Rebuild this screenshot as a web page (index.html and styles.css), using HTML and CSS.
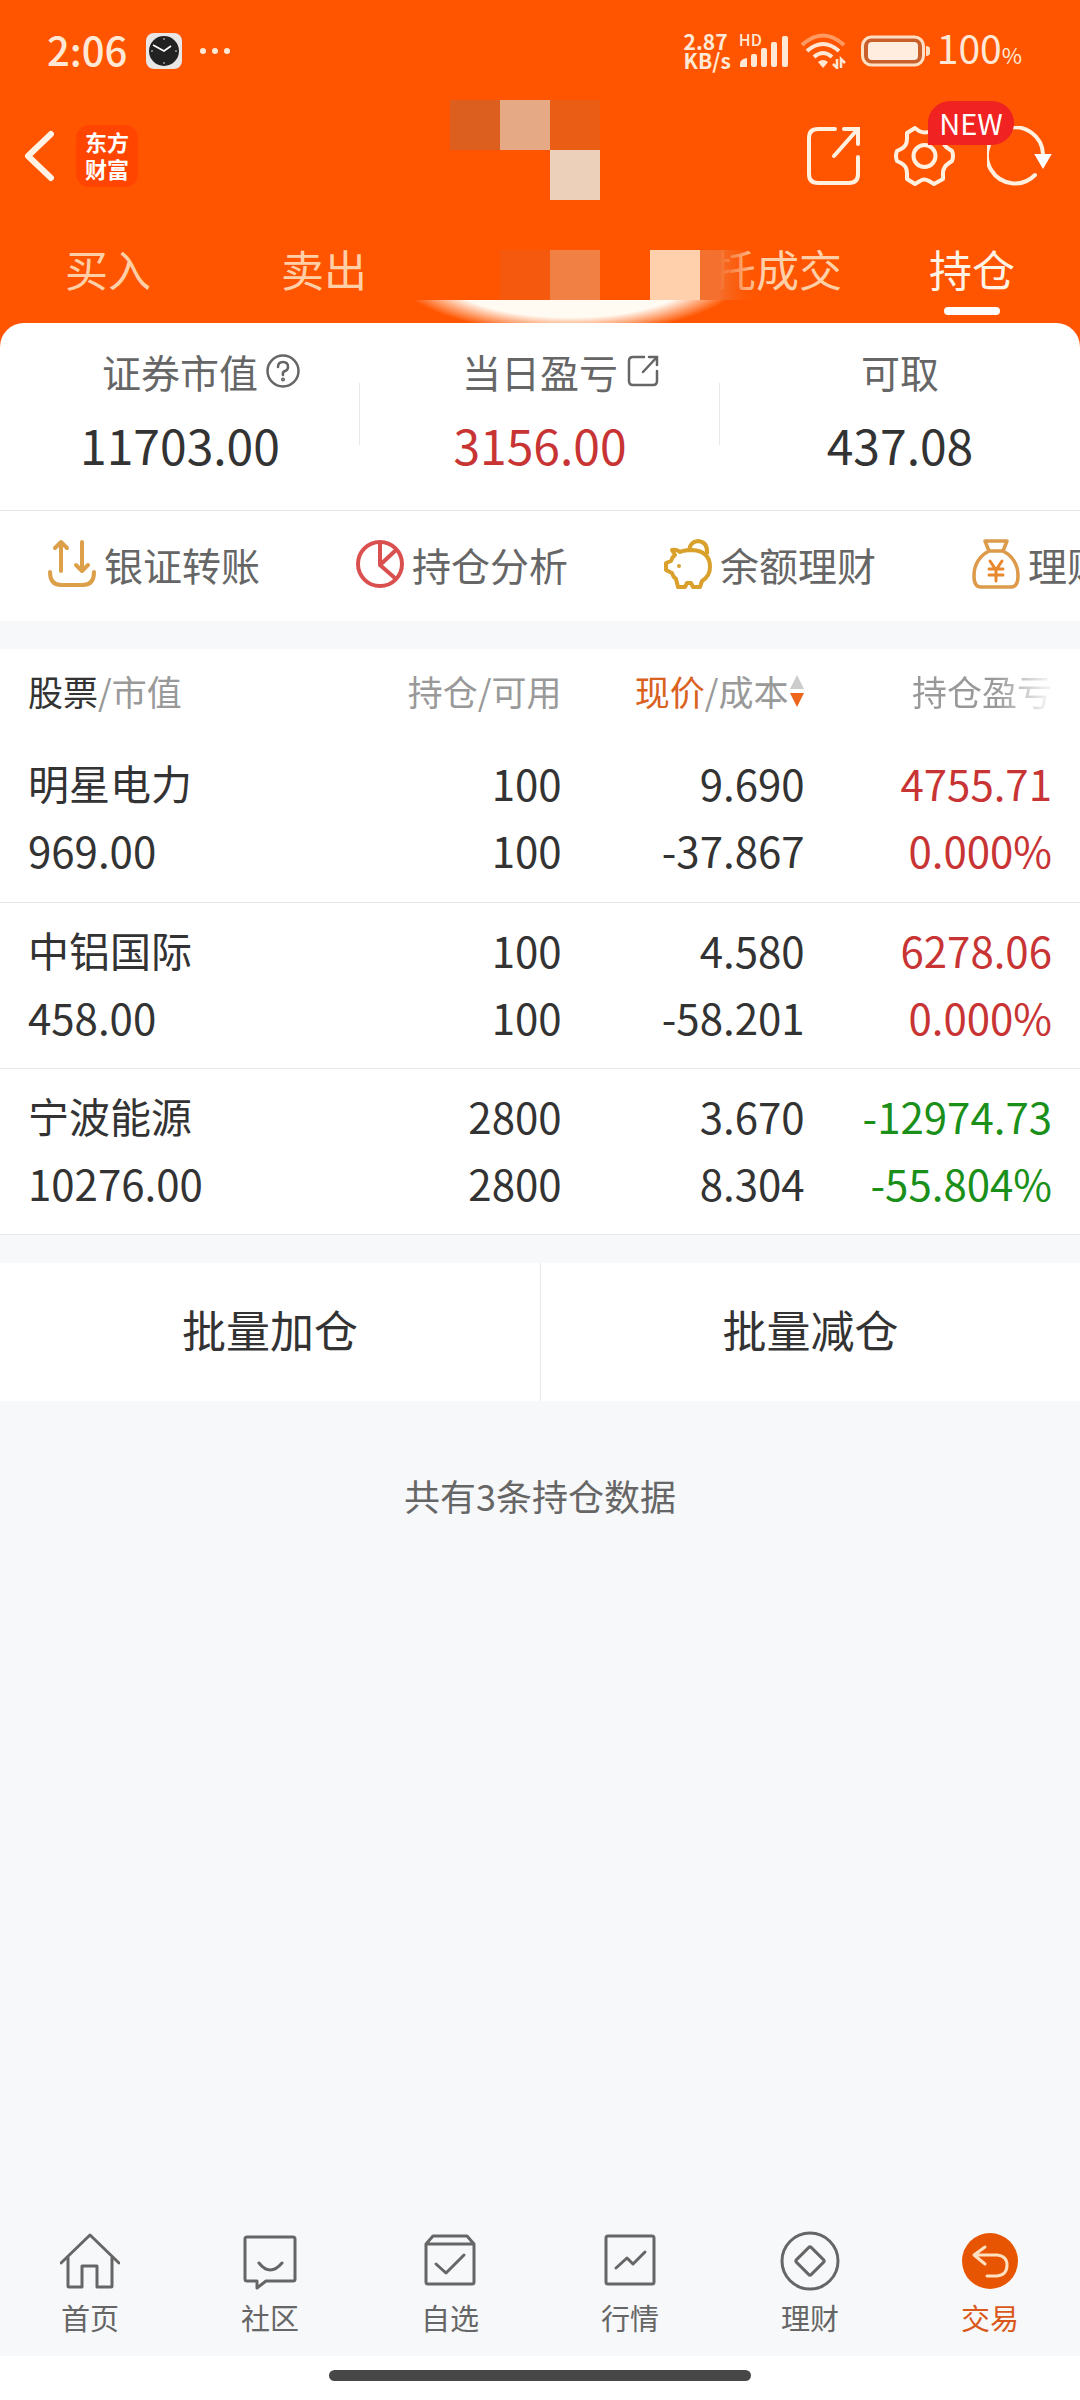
FILE: index.html
```html
<!DOCTYPE html>
<html lang="zh-CN">
<head>
  <meta charset="UTF-8">
  <meta name="viewport" content="width=device-width, initial-scale=1">
  <title>持仓</title>
  <link rel="stylesheet" href="styles.css">
</head>
<body>
  <header class="header">
    <div class="status">
      <span class="time">2:06</span>
      <svg class="clock" width="36" height="36" viewBox="0 0 36 36">
        <rect width="36" height="36" rx="8" fill="#e9e6e6"/>
        <circle cx="18" cy="18" r="15" fill="#222"/>
        <path d="M7 12l11 6 7-5" fill="none" stroke="#fff" stroke-width="1.6"/>
        <g fill="#999"><circle cx="18" cy="6" r="1"/><circle cx="18" cy="30" r="1"/><circle cx="6" cy="18" r="1"/><circle cx="30" cy="18" r="1"/></g>
      </svg>
      <svg width="32" height="8" viewBox="0 0 32 8" fill="#ffe9d6">
        <circle cx="4" cy="4" r="3"/><circle cx="16" cy="4" r="3"/><circle cx="28" cy="4" r="3"/>
      </svg>
      <div class="status-right">
        <div class="speed"><span>2.87</span><span>KB/s</span></div>
        <div class="signal">
          <span class="hd">HD</span>
          <svg width="50" height="32" viewBox="0 0 50 32" fill="#ffe9d6">
            <path d="M1 32v-3q0-5 7-6v9z"/>
            <rect x="12" y="19" width="6" height="13" rx="2"/><rect x="22" y="13" width="6" height="19" rx="2"/>
            <rect x="32" y="7" width="6" height="25" rx="2"/><rect x="43" y="1" width="6" height="31" rx="2"/>
          </svg>
        </div>
        <svg class="wifi" width="48" height="36" viewBox="0 0 48 36" fill="none" stroke="#ffe9d6" stroke-width="4">
          <path d="M2 12q21-19 42 0" stroke="#ff9a62"/>
          <path d="M7 18q16-14 32 0M14 24q9-8 18 0"/>
          <path d="M18 29q5-4 10 0l-5 6z" fill="#ffe9d6" stroke="none"/>
          <path d="M37 26v9l-4-4M41 35v-9l4 4" stroke-width="2.5"/>
        </svg>
        <svg width="70" height="32" viewBox="0 0 70 32">
          <rect x="1.500" y="2" width="61" height="28" rx="9" fill="#c9602c" stroke="#ffe0c4" stroke-width="3"/>
          <rect x="7" y="7" width="50" height="18" rx="4" fill="#ffede0"/>
          <path d="M65 11q4 0 4 3v4q0 3-4 3z" fill="#ffe0c4"/>
        </svg>
        <span class="battery">100<small>%</small></span>
      </div>
    </div>

    <div class="titlebar">
      <button class="back" aria-label="返回">
        <svg width="32" height="52" viewBox="0 0 32 52" fill="none" stroke="#fff3e6" stroke-width="6" stroke-linecap="round" stroke-linejoin="round"><path d="M27 4L4 26l23 22"/></svg>
      </button>
      <div class="logo"><span>东方</span><span>财富</span></div>
      <div class="actions">
        <button aria-label="分享">
          <svg width="56" height="60" viewBox="0 0 56 60" fill="none" stroke="#fff0e0" stroke-width="4" stroke-linecap="round">
            <path d="M29 3H12Q3 3 3 12v36q0 9 9 9h31q9 0 9-9V31M38 3h14v15M51 4L28 30"/>
          </svg>
        </button>
        <button class="settings" aria-label="设置">
          <svg width="61" height="60" viewBox="0 0 61 60" fill="none" stroke="#fff0e0" stroke-width="4" stroke-linejoin="round">
            <path d="M21 2l4 3q6 3 12 0l4-3 8 5v6q0 7 6 10l3 2q2 5 0 10l-3 2q-6 4-6 10v6l-9 5-5-3q-5-3-9 0l-5 3-8-5v-6q0-7-6-10l-4-2q-2-5 0-10l4-2q6-3 6-10V7z"/>
            <circle cx="30.500" cy="30" r="11"/>
          </svg>
          <span class="badge">NEW</span>
        </button>
        <button aria-label="刷新">
          <svg width="65" height="60" viewBox="0 0 65 60" fill="none" stroke="#fff0e0" stroke-width="4" stroke-linecap="round">
            <path d="M48 49A28 28 0 1 1 56 28"/>
            <path d="M49 29h14l-7 12z" fill="#fff" stroke="#fff" stroke-width="2"/>
          </svg>
        </button>
      </div>
    </div>

    <nav class="tabs">
      <button>买入</button>
      <button>卖出</button>
      <button aria-hidden="true"></button>
      <button>委托成交</button>
      <button class="active">持仓</button>
    </nav>

    <!-- mosaic over the account name and the middle tabs -->
    <svg class="mosaic" width="370" height="223" viewBox="0 0 370 223">
      <defs>
        <linearGradient id="fade"><stop offset="0" stop-color="#f3702f"/><stop offset="0.3" stop-color="#f3702f"/><stop offset="1" stop-color="#ff5500" stop-opacity="0"/></linearGradient>
        <radialGradient id="glow"><stop offset="0.75" stop-color="#fffaf2"/><stop offset="1" stop-color="#fffaf2" stop-opacity="0"/></radialGradient>
        <clipPath id="band"><rect y="200" width="370" height="23"/></clipPath>
      </defs>
      <g shape-rendering="crispEdges">
        <rect x="40" width="50" height="50" fill="#dd5f20"/>
        <rect x="90" width="50" height="50" fill="#e5a986"/>
        <rect x="140" width="50" height="50" fill="#e95e14"/>
        <rect x="140" y="50" width="50" height="50" fill="#ecd0b9"/>
        <rect x="90" y="150" width="50" height="50" fill="#f5590d"/>
        <rect x="140" y="150" width="50" height="50" fill="#f08043"/>
        <rect x="240" y="150" width="50" height="50" fill="#ffd0ab"/>
        <rect x="290" y="150" width="60" height="50" fill="url(#fade)"/>
      </g>
      <ellipse cx="160" cy="168" rx="180" ry="66" fill="url(#glow)" clip-path="url(#band)"/>
    </svg>
  </header>

  <main>
    <section class="card">
      <div class="summary">
        <div class="stat">
          <div class="stat-label"><span>证券市值</span>
            <svg width="34" height="34" viewBox="0 0 34 34" fill="none" stroke="#666" stroke-width="2.500" stroke-linecap="round">
              <circle cx="17" cy="17" r="15.500"/><path d="M12 13q0-5 5-5t5 5q0 3-3 4t-2 4"/><circle cx="17" cy="25.500" r="0.800"/>
            </svg>
          </div>
          <div class="stat-value">11703.00</div>
        </div>
        <div class="stat">
          <div class="stat-label"><span>当日盈亏</span>
            <svg width="34" height="34" viewBox="0 0 34 34" fill="none" stroke="#666" stroke-width="2.500" stroke-linecap="round">
              <path d="M18 3H7Q3 3 3 7v20q0 4 4 4h20q4 0 4-4V17M23 3h8v8M31 3L17 18"/>
            </svg>
          </div>
          <div class="stat-value up">3156.00</div>
        </div>
        <div class="stat">
          <div class="stat-label"><span>可取</span></div>
          <div class="stat-value">437.08</div>
        </div>
      </div>

      <div class="tools">
        <button>
          <svg width="48" height="50" viewBox="0 0 48 50" fill="none" stroke="#dda04a" stroke-width="4" stroke-linecap="round" stroke-linejoin="round">
            <path d="M2 33q0 13 11 13h22q11 0 11-13M13 32V4M7 9l6-6 6 6M34 3v29M28 26l6 6 6-6"/>
          </svg>银证转账
        </button>
        <button>
          <svg width="48" height="50" viewBox="0 0 48 50" fill="none" stroke="#d9504f" stroke-width="4" stroke-linejoin="round">
            <circle cx="24" cy="25" r="22"/><path d="M24 3v23L40 11M24 26l16 14"/>
          </svg>持仓分析
        </button>
        <button>
          <svg width="48" height="50" viewBox="0 0 48 50" fill="none" stroke="#d9a02c" stroke-width="4" stroke-linejoin="round">
            <path d="M8 11q5-1 8 2 4-2 12-2 18 1 18 17 0 9-8 14l-2 6h-7l-2-4h-4l-2 4h-7l-2-8q-3-2-4-6l-6-3v-7l5-2q1-4 4-6z"/>
            <path d="M25 11q1-8 9-9 10 1 9 13"/><circle cx="15" cy="27" r="1" stroke-width="2"/>
          </svg>余额理财
        </button>
        <button>
          <svg width="48" height="50" viewBox="0 0 48 50" fill="none" stroke="#dc9a4a" stroke-width="3.500" stroke-linejoin="round" stroke-linecap="round">
            <path d="M13 2h22l-4 10H17zM17 12Q2 20 2 37q0 11 7 11h30q7 0 7-11 0-17-15-25"/>
            <path d="M18 22l6 9 6-9M17 30h14M17 36h14M24 31v11" stroke="#e8882c" stroke-width="3"/>
          </svg>理财
        </button>
      </div>
    </section>

    <table class="holdings">
      <colgroup><col class="c-name"><col class="c-qty"><col class="c-price"><col></colgroup>
      <thead>
        <tr>
          <th><b>股票</b>/市值</th>
          <th>持仓/可用</th>
          <th><span class="sort"><b class="on">现价</b>/成本<svg width="16" height="34" viewBox="0 0 16 34"><path d="M8 1l7 14H1z" fill="#ccc"/><path d="M8 33l7-14H1z" fill="#ec651b"/></svg></span></th>
          <th><span class="faded">持仓盈亏</span></th>
        </tr>
      </thead>
      <tbody>
        <tr>
          <td><div class="name">明星电力</div>969.00</td>
          <td>100<br>100</td>
          <td>9.690<br>-37.867</td>
          <td class="up">4755.71<br>0.000%</td>
        </tr>
        <tr>
          <td><div class="name">中铝国际</div>458.00</td>
          <td>100<br>100</td>
          <td>4.580<br>-58.201</td>
          <td class="up">6278.06<br>0.000%</td>
        </tr>
        <tr>
          <td><div class="name">宁波能源</div>10276.00</td>
          <td>2800<br>2800</td>
          <td>3.670<br>8.304</td>
          <td class="down">-12974.73<br>-55.804%</td>
        </tr>
      </tbody>
    </table>

    <div class="batch">
      <button>批量加仓</button>
      <button>批量减仓</button>
    </div>

    <p class="count">共有3条持仓数据</p>
  </main>

  <nav class="bottom">
    <a href="#">
      <svg width="60" height="60" viewBox="0 0 60 60"><path d="M1 32L30 4l29 28M8 26v29q0 1 1 1h13V35h15v21h14q1 0 1-1V26"/></svg>
      首页
    </a>
    <a href="#">
      <svg width="60" height="60" viewBox="0 0 60 60"><path d="M7 6h46q2 0 2 2v40q0 2-2 2H26l-9 7v-7H7q-2 0-2-2V8q0-2 2-2zM19 32q11 14 23 0"/></svg>
      社区
    </a>
    <a href="#">
      <svg width="60" height="60" viewBox="0 0 60 60"><path d="M6 13v38q0 2 2 2h44q2 0 2-2V13l-7-8H13zM6 13h48M16 33l10 9 18-18"/></svg>
      自选
    </a>
    <a href="#">
      <svg width="60" height="60" viewBox="0 0 60 60"><rect x="6" y="5" width="48" height="48" rx="2"/><path d="M16 37l11-10 6 6 12-12"/></svg>
      行情
    </a>
    <a href="#">
      <svg width="60" height="60" viewBox="0 0 60 60"><circle cx="30" cy="30" r="28"/><rect x="19.500" y="19.500" width="21" height="21" rx="2" transform="rotate(45 30 30)"/></svg>
      理财
    </a>
    <a href="#" class="active">
      <svg width="60" height="60" viewBox="0 0 60 60"><circle cx="30" cy="30" r="28" fill="#e85502" stroke="none"/><path d="M25 16l-11 8 11 9M14 24h23q10 1 10 10 0 10-10 11H27" stroke="#ffe0c0" stroke-width="3"/></svg>
      交易
    </a>
  </nav>
  <div class="gesture"><span></span></div>
</body>
</html>
```
FILE: styles.css
```css
* {
  box-sizing: border-box;
}
body {
  margin: 0;
  min-height: 100vh;
  display: flex;
  flex-direction: column;
  background: #f7f8fa;
  color: #333;
  font-family: "Noto Sans CJK SC", sans-serif;
  overflow-x: hidden;
}
button {
  padding: 0;
  border: none;
  background: none;
  color: inherit;
  font: inherit;
  cursor: pointer;
}
svg {
  display: block;
  flex: none;
}
main {
  flex: 1;
}
.up {
  color: #c83434;
}
.down {
  color: #1a901a;
}

/* header */
.header {
  position: relative;
  background: #ff5500;
  color: #ffe9d6;
  padding-bottom: 24px;
}
.status {
  height: 102px;
  padding: 0 58px 0 47px;
  display: flex;
  align-items: center;
}
.time {
  padding-bottom: 4px;
  font-size: 40px;
  font-weight: 500;
}
.clock {
  margin: 0 17px 0 19px;
}
.status-right {
  margin-left: auto;
  display: flex;
  align-items: center;
}
.speed {
  display: flex;
  flex-direction: column;
  font-size: 21px;
  line-height: 19px;
  font-weight: 700;
}
.signal {
  position: relative;
  margin: 0 11px 0 8px;
}
.hd {
  position: absolute;
  left: 0;
  top: -2px;
  font-size: 16px;
  line-height: 12px;
  font-weight: 500;
}
.wifi {
  margin-right: 13px;
}
.battery {
  margin-left: 6px;
  padding-bottom: 2px;
  font-size: 39px;
  line-height: 50px;
}
.battery small {
  font-size: 22px;
}
.titlebar {
  height: 108px;
  padding: 0 28px 0 24px;
  display: flex;
  align-items: center;
}
.logo {
  width: 62px;
  height: 62px;
  margin-left: 20px;
  padding-top: 3px;
  display: flex;
  flex-direction: column;
  align-items: center;
  border-radius: 13px;
  background: #ff4500;
  color: #fff;
  font-size: 22px;
  line-height: 27px;
  font-weight: 700;
}
.actions {
  margin-left: auto;
  display: flex;
  gap: 32px;
}
.settings {
  position: relative;
}
.badge {
  position: absolute;
  z-index: 1;
  left: 34px;
  top: -25px;
  width: 86px;
  height: 44px;
  border-radius: 22px 22px 22px 0;
  background: #f02222;
  color: #fff;
  font-size: 29px;
  line-height: 42px;
}
.tabs {
  height: 113px;
  padding-top: 28px;
  display: grid;
  grid-template-columns: repeat(5, 1fr);
  align-items: start;
}
.tabs button {
  color: #ffcfa8;
  font-size: 43px;
  line-height: 60px;
}
.tabs .active {
  color: #fff3e6;
}
.tabs .active::after {
  content: "";
  display: block;
  width: 56px;
  height: 8px;
  margin: 9px auto 0;
  border-radius: 4px;
  background: #fff;
}
.mosaic {
  position: absolute;
  top: 100px;
  left: calc(50% - 130px);
}

/* account summary */
.card {
  position: relative;
  margin-top: -24px;
  border-radius: 24px 24px 0 0;
  background: #fff;
}
.summary {
  height: 188px;
  padding-top: 18px;
  display: grid;
  grid-template-columns: repeat(3, 1fr);
  border-bottom: 1px solid #e8e8e8;
}
.stat {
  text-align: center;
  background: linear-gradient(#e8e8e8, #e8e8e8) no-repeat right 42px / 1px 62px;
}
.stat:last-child {
  background: none;
}
.stat-label {
  display: grid;
  grid-template-columns: 1fr auto 1fr;
  align-items: center;
  column-gap: 8px;
  color: #666;
  font-size: 39px;
  line-height: 60px;
}
.stat-label span {
  grid-column: 2;
}
.stat-value {
  margin-top: 8px;
  font-size: 48px;
  line-height: 70px;
}
.tools {
  height: 110px;
  padding: 0 0 4px 48px;
  display: flex;
  gap: 96px;
  overflow: hidden;
}
.tools button {
  flex: none;
  display: flex;
  align-items: center;
  gap: 8px;
  color: #666;
  font-size: 39px;
}

/* holdings */
.holdings {
  width: 100%;
  margin-top: 28px;
  table-layout: fixed;
  border-collapse: collapse;
  background: #fff;
}
.c-name {
  width: 28%;
}
.c-qty {
  width: 24%;
}
.c-price {
  width: 22.5%;
}
.holdings th {
  height: 87px;
  padding: 0 0 4px;
  color: #999;
  font-size: 35px;
  font-weight: 400;
  text-align: right;
  white-space: nowrap;
}
.holdings b {
  color: #333;
  font-weight: 400;
}
.holdings .on {
  color: #d9621f;
}
.sort {
  display: flex;
  align-items: center;
  justify-content: flex-end;
}
.faded {
  background: linear-gradient(90deg, #999 60%, #eee 95%);
  -webkit-background-clip: text;
  background-clip: text;
  color: transparent;
}
.holdings td {
  height: 166px;
  padding: 0 0 5px;
  border-bottom: 1px solid #e8e8e8;
  font-size: 42px;
  line-height: 67px;
  text-align: right;
}
.holdings th:first-child,
.holdings td:first-child {
  padding-left: 28px;
  text-align: left;
}
.holdings th:last-child,
.holdings td:last-child {
  padding-right: 28px;
}
.name {
  font-size: 41px;
}

.batch {
  margin-top: 28px;
  display: grid;
  grid-template-columns: 1fr 1fr;
  background: #fff;
}
.batch button {
  height: 138px;
  padding-bottom: 5px;
  font-size: 44px;
}
.batch button + button {
  border-left: 1px solid #e8e8e8;
}
.count {
  margin: 68px 0;
  color: #666;
  font-size: 36px;
  line-height: 52px;
  text-align: center;
}

/* bottom navigation */
.bottom {
  height: 126px;
  padding-top: 1px;
  display: grid;
  grid-template-columns: repeat(6, 1fr);
}
.bottom a {
  display: flex;
  flex-direction: column;
  align-items: center;
  gap: 6px;
  color: #666;
  font-size: 29px;
  line-height: 40px;
  text-decoration: none;
}
.bottom svg {
  fill: none;
  stroke: #666;
  stroke-width: 3;
  stroke-linecap: round;
  stroke-linejoin: round;
}
.bottom .active {
  color: #d9581a;
}
.gesture {
  height: 44px;
  padding-top: 14px;
  background: #fff;
}
.gesture span {
  display: block;
  width: 39%;
  height: 11px;
  margin: 0 auto;
  border-radius: 6px;
  background: #474747;
}
```
